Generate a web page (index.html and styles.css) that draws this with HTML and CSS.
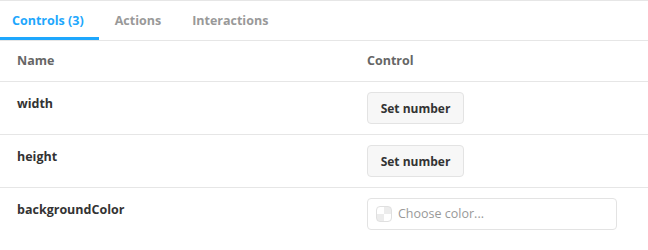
FILE: index.html
```html
<!DOCTYPE html>
<html lang="en">

<head>
    <meta charset="UTF-8">
    <meta name="viewport" content="width=device-width, initial-scale=1.0">
    <title>Controls</title>
    <link rel="stylesheet" href="styles.css">
</head>

<body>
    <div class="panel">
        <div class="tabs">
            <div class="tab active">Controls (3)</div>
            <div class="tab">Actions</div>
            <div class="tab">Interactions</div>
        </div>

        <!-- args table -->
        <div class="args-table">
            <div class="row head">
                <div class="cell">Name</div>
                <div class="cell">Control</div>
            </div>
            <div class="row">
                <div class="cell name">width</div>
                <div class="cell">
                    <button class="set-btn">Set number</button>
                </div>
            </div>
            <div class="row">
                <div class="cell name">height</div>
                <div class="cell">
                    <button class="set-btn">Set number</button>
                </div>
            </div>
            <div class="row">
                <div class="cell name">backgroundColor</div>
                <div class="cell">
                    <div class="color-input">
                        <span class="swatch"></span>
                        <span class="placeholder">Choose color...</span>
                    </div>
                </div>
            </div>
        </div>
    </div>
</body>

</html>
```

FILE: styles.css
```css
body {
    margin: 0;
    font-family: 'Open Sans', 'Noto Sans', sans-serif;
    background: white;
    color: #333;
}

.panel {
    border-top: 1px solid #e6e6e6;
}

.tabs {
    display: flex;
    height: 39px;
    border-bottom: 1px solid #e6e6e6;
}

.tab {
    display: flex;
    align-items: center;
    padding: 0 15px 0 12px;
    margin-right: 4px;
    font-size: 12.5px;
    font-weight: 700;
    color: #999;
    cursor: pointer;
}

.tab.active {
    color: #1ea7fd;
    box-shadow: inset 0 -3px 0 #1ea7fd;
}

.row {
    display: grid;
    grid-template-columns: 352px 1fr;
    border-bottom: 1px solid #e6e6e6;
}

.row:last-child {
    border-bottom: none;
}

.cell {
    padding: 10px 15px;
    font-size: 12.5px;
    font-weight: 700;
    line-height: 20px;
}

.cell:first-child {
    padding-left: 17px;
}

.row.head .cell {
    color: #666;
}

.cell.name {
    padding-top: 12px;
    color: #333;
}

.set-btn {
    width: 97px;
    height: 32px;
    padding: 0;
    font-family: inherit;
    font-size: 12px;
    font-weight: 700;
    color: #333;
    background: #f7f7f7;
    border: 1px solid #e3e3e3;
    border-radius: 4px;
    cursor: pointer;
}

.color-input {
    display: flex;
    align-items: center;
    gap: 6px;
    width: 250px;
    height: 32px;
    box-sizing: border-box;
    padding: 0 8px;
    border: 1px solid #e3e3e3;
    border-radius: 4px;
}

.swatch {
    width: 16px;
    height: 16px;
    box-sizing: border-box;
    border-radius: 4px;
    border: 1px solid #e0e0e0;
    background: conic-gradient(#ececec 0 25%, #fff 0 50%, #ececec 0 75%, #fff 0);
}

.placeholder {
    font-size: 12.5px;
    font-weight: 400;
    color: #999;
}
```
